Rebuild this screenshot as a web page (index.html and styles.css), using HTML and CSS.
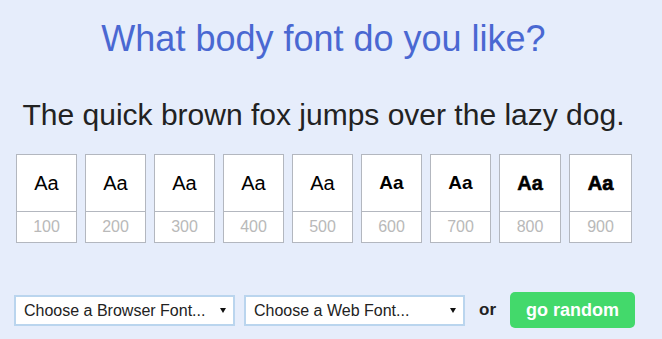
FILE: index.html
```html
<!DOCTYPE html>
<html lang="en">
<head>
    <meta charset="UTF-8">
    <title>Body Font</title>
    <link rel="stylesheet" href="styles.css">
</head>
<body>
    <div class="main-wrapper">
        <h1>What body font do you like?</h1>
        <p class="sample">The quick brown fox jumps over the lazy dog.</p>

        <div class="weight-row">
            <div class="weight-box w100"><div class="aa">Aa</div><div class="num">100</div></div>
            <div class="weight-box w200"><div class="aa">Aa</div><div class="num">200</div></div>
            <div class="weight-box w300"><div class="aa">Aa</div><div class="num">300</div></div>
            <div class="weight-box w400"><div class="aa">Aa</div><div class="num">400</div></div>
            <div class="weight-box w500"><div class="aa">Aa</div><div class="num">500</div></div>
            <div class="weight-box w600"><div class="aa">Aa</div><div class="num">600</div></div>
            <div class="weight-box w700"><div class="aa">Aa</div><div class="num">700</div></div>
            <div class="weight-box w800 wide"><div class="aa">Aa</div><div class="num">800</div></div>
            <div class="weight-box w900 wider"><div class="aa">Aa</div><div class="num">900</div></div>
        </div>

        <div class="picker-row">
            <div class="select-wrap">
                <select>
                    <option>Choose a Browser Font...</option>
                </select>
                <span class="arrow"></span>
            </div>
            <div class="select-wrap">
                <select>
                    <option>Choose a Web Font...</option>
                </select>
                <span class="arrow"></span>
            </div>
            <span class="or">or</span>
            <button class="random-btn">go random</button>
        </div>
    </div>
</body>
</html>
```

FILE: styles.css
```css
body {
    margin: 0;
    background: #e6edfb;
    font-family: 'Liberation Sans', Arial, sans-serif;
    color: #222;
}
.main-wrapper {
    width: 647px;
    padding-top: 18px;
}
h1 {
    margin: 0;
    text-align: center;
    color: #4a68d2;
    font-size: 36px;
    font-weight: normal;
}
.sample {
    margin: 38px 0 0 0;
    text-align: center;
    font-size: 30px;
    color: #222;
}
.weight-row {
    display: flex;
    gap: 8px;
    margin-top: 22px;
    padding-left: 16px;
}
.weight-box {
    width: 61px;
    box-sizing: border-box;
    border: 1px solid #b3b7bf;
    background: #fff;
}
.weight-box.wide { width: 62px; }
.weight-box.wider { width: 63px; }
.aa {
    height: 56px;
    display: flex;
    align-items: center;
    justify-content: center;
    font-size: 20px;
    color: #000;
    border-bottom: 1px solid #b3b7bf;
}
.num {
    height: 30px;
    display: flex;
    align-items: center;
    justify-content: center;
    font-size: 16px;
    color: #b9b9b9;
}
.w100 .aa, .w200 .aa, .w300 .aa, .w400 .aa, .w500 .aa { font-weight: normal; }
.w600 .aa, .w700 .aa { font-weight: bold; font-size: 19px; }
.w800 .aa { font-weight: bold; -webkit-text-stroke: 0.5px #000; }
.w900 .aa { font-weight: bold; -webkit-text-stroke: 0.7px #000; }
.picker-row {
    display: flex;
    align-items: center;
    margin-top: 49px;
    padding-left: 14px;
}
.select-wrap {
    position: relative;
    margin-right: 9px;
}
.select-wrap select {
    -webkit-appearance: none;
    appearance: none;
    width: 221px;
    height: 31px;
    border: 2px solid #bad5ee;
    border-radius: 0;
    background: #fff;
    padding: 0 0 0 8px;
    font-family: 'Liberation Sans', Arial, sans-serif;
    font-size: 16px;
    color: #222;
    outline: none;
}
.select-wrap .arrow {
    position: absolute;
    right: 9px;
    top: 13px;
    width: 0;
    height: 0;
    border-left: 3px solid transparent;
    border-right: 3px solid transparent;
    border-top: 5px solid #111;
    pointer-events: none;
}
.or {
    margin-left: 5px;
    font-weight: bold;
    font-size: 17px;
    color: #222;
}
.random-btn {
    margin-left: 14px;
    height: 36px;
    width: 125px;
    border: none;
    border-radius: 5px;
    background: #43d96b;
    color: #fff;
    font-family: 'Liberation Sans', Arial, sans-serif;
    font-weight: bold;
    font-size: 18px;
    cursor: pointer;
}
```
